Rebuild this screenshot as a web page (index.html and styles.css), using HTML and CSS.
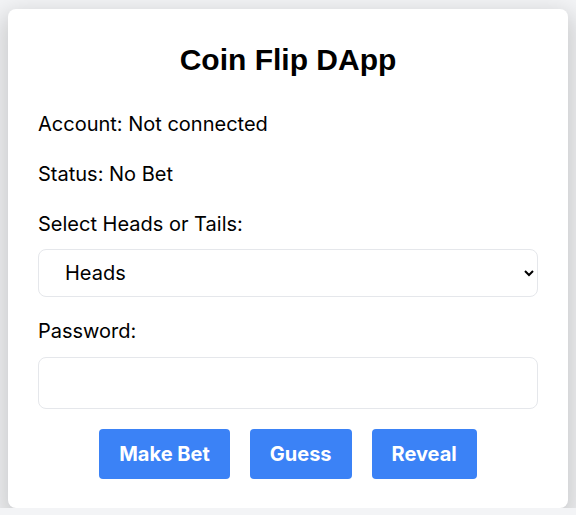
FILE: index.html
```html
<!DOCTYPE html>
<html lang="en">
<head>
<meta charset="utf-8">
<title>Coin Flip DApp</title>
<link rel="stylesheet" href="styles.css">
</head>
<body>
<div class="card">
  <h1 class="title">Coin Flip DApp</h1>
  <p class="line">Account: Not connected</p>
  <p class="line">Status: No Bet</p>
  <label class="label" for="side">Select Heads or Tails:</label>
  <select id="side" class="field select">
    <option>Heads</option>
    <option>Tails</option>
  </select>
  <label class="label pw" for="pw">Password:</label>
  <input id="pw" class="field input" type="password">
  <div class="actions">
    <button class="btn">Make Bet</button>
    <button class="btn">Guess</button>
    <button class="btn">Reveal</button>
  </div>
</div>
</body>
</html>
```

FILE: styles.css
```css
html, body {
  margin: 0;
  padding: 0;
}
body {
  background: #f3f4f6;
  padding: 9px 8px 0;
  font-family: Inter, "Liberation Sans", sans-serif;
  color: #000;
}
.card {
  background: #fff;
  border-radius: 8px;
  box-shadow: 0 10px 24px 6px rgba(0, 0, 0, 0.17);
  padding: 33px 30px 29px;
  height: 499px;
  box-sizing: border-box;
}
.title {
  margin: 0 0 34px;
  text-align: center;
  font-family: "Liberation Sans", Arial, sans-serif;
  font-weight: 700;
  font-size: 30px;
  line-height: 36px;
}
.line {
  margin: 0 0 26px;
  font-size: 20px;
  line-height: 24px;
}
.label {
  display: block;
  font-size: 20px;
  line-height: 24px;
  margin-bottom: 13px;
}
.label.pw {
  margin-top: 22px;
  margin-bottom: 14px;
}
.field {
  display: block;
  width: 100%;
  box-sizing: border-box;
  border: 1px solid #e5e7eb;
  border-radius: 8px;
  background: #fff;
  font-family: Inter, sans-serif;
  font-size: 20px;
  color: #000;
}
.select {
  height: 48px;
  padding: 0 10px 0 22px;
}
.input {
  height: 52px;
  padding: 0 12px;
}
.actions {
  display: flex;
  justify-content: center;
  gap: 20px;
  margin-top: 20px;
}
.btn {
  height: 50px;
  padding: 0 20px;
  border: none;
  border-radius: 4px;
  background: #3b82f6;
  color: #fff;
  font-family: Inter, sans-serif;
  font-weight: 700;
  font-size: 20px;
}
```
